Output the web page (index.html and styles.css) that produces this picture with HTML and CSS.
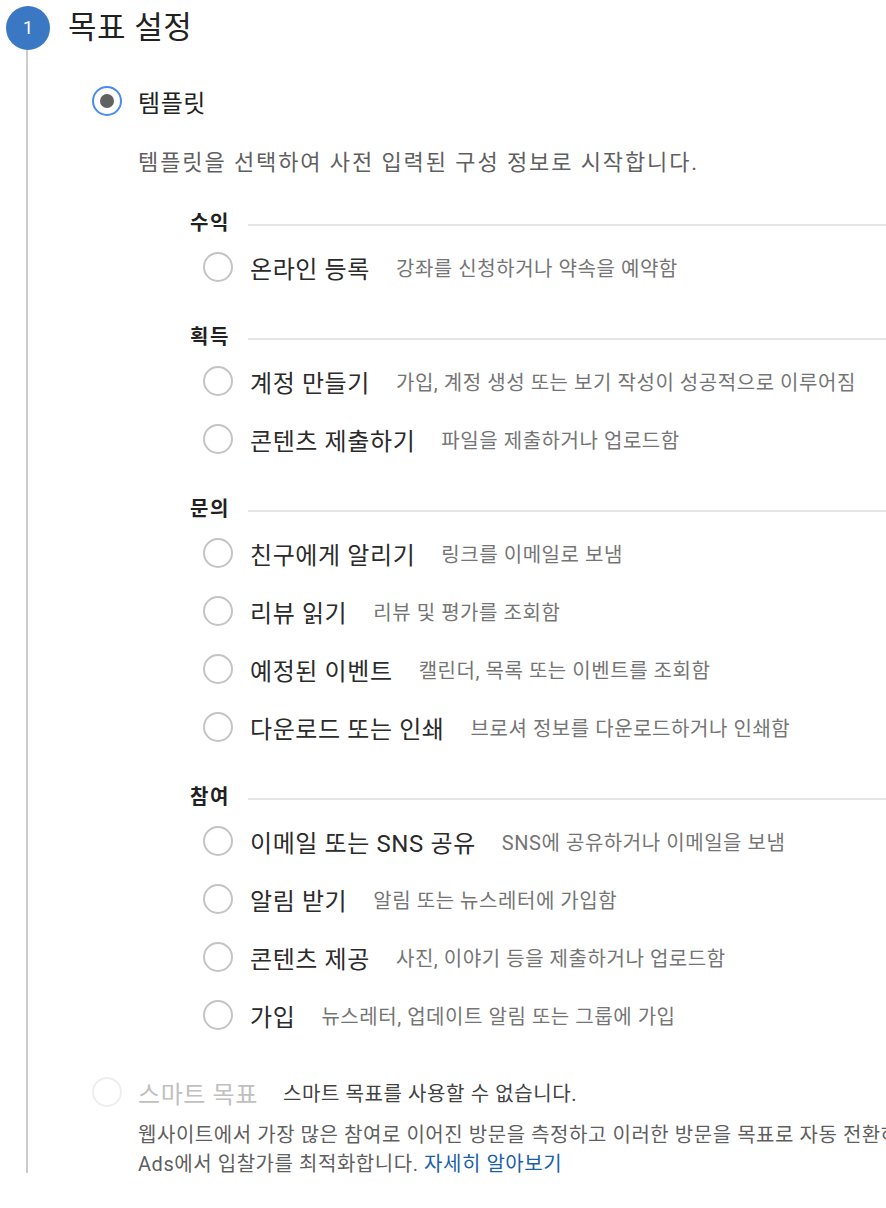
FILE: index.html
```html
<!DOCTYPE html>
<html lang="ko">
<head>
<meta charset="utf-8">
<title>목표 설정</title>
<link rel="stylesheet" href="styles.css">
</head>
<body>
<div class="stepper">
  <div class="rail">
    <div class="step-num">1</div>
    <div class="rail-line"></div>
  </div>
  <div class="content">
    <h1 class="title">목표 설정</h1>

    <div class="choice choice-main">
      <span class="radio radio-on"><span class="dot"></span></span>
      <span class="choice-label">템플릿</span>
    </div>
    <p class="choice-desc">템플릿을 선택하여 사전 입력된 구성 정보로 시작합니다.</p>

    <div class="groups">
      <section class="group">
        <div class="group-head"><span class="group-name">수익</span><span class="group-rule"></span></div>
        <div class="item"><span class="radio"></span><span class="item-label">온라인 등록</span><span class="item-desc">강좌를 신청하거나 약속을 예약함</span></div>
      </section>

      <section class="group">
        <div class="group-head"><span class="group-name">획득</span><span class="group-rule"></span></div>
        <div class="item"><span class="radio"></span><span class="item-label">계정 만들기</span><span class="item-desc">가입, 계정 생성 또는 보기 작성이 성공적으로 이루어짐</span></div>
        <div class="item"><span class="radio"></span><span class="item-label">콘텐츠 제출하기</span><span class="item-desc">파일을 제출하거나 업로드함</span></div>
      </section>

      <section class="group">
        <div class="group-head"><span class="group-name">문의</span><span class="group-rule"></span></div>
        <div class="item"><span class="radio"></span><span class="item-label">친구에게 알리기</span><span class="item-desc">링크를 이메일로 보냄</span></div>
        <div class="item"><span class="radio"></span><span class="item-label">리뷰 읽기</span><span class="item-desc">리뷰 및 평가를 조회함</span></div>
        <div class="item"><span class="radio"></span><span class="item-label">예정된 이벤트</span><span class="item-desc">캘린더, 목록 또는 이벤트를 조회함</span></div>
        <div class="item"><span class="radio"></span><span class="item-label">다운로드 또는 인쇄</span><span class="item-desc">브로셔 정보를 다운로드하거나 인쇄함</span></div>
      </section>

      <section class="group">
        <div class="group-head"><span class="group-name">참여</span><span class="group-rule"></span></div>
        <div class="item"><span class="radio"></span><span class="item-label">이메일 또는 SNS 공유</span><span class="item-desc">SNS에 공유하거나 이메일을 보냄</span></div>
        <div class="item"><span class="radio"></span><span class="item-label">알림 받기</span><span class="item-desc">알림 또는 뉴스레터에 가입함</span></div>
        <div class="item"><span class="radio"></span><span class="item-label">콘텐츠 제공</span><span class="item-desc">사진, 이야기 등을 제출하거나 업로드함</span></div>
        <div class="item"><span class="radio"></span><span class="item-label">가입</span><span class="item-desc">뉴스레터, 업데이트 알림 또는 그룹에 가입</span></div>
      </section>
    </div>

    <div class="choice choice-smart">
      <span class="radio radio-disabled"></span>
      <span class="choice-label label-disabled">스마트 목표</span>
      <span class="smart-note">스마트 목표를 사용할 수 없습니다.</span>
    </div>
    <p class="smart-desc">웹사이트에서 가장 많은 참여로 이어진 방문을 측정하고 이러한 방문을 목표로 자동 전환하여 Google Ads에서 입찰가를 최적화합니다. <a class="link" href="#">자세히 알아보기</a></p>
  </div>
</div>
</body>
</html>
```

FILE: styles.css
```css
html, body {
  margin: 0;
  padding: 0;
  background: #ffffff;
}

body {
  width: 886px;
  height: 1208px;
  overflow: hidden;
  font-family: Roboto, "Noto Sans CJK KR", sans-serif;
  color: #212121;
}

.stepper {
  display: flex;
  height: 1173px;
  overflow: hidden;
}

.rail {
  flex: 0 0 56px;
  display: flex;
  flex-direction: column;
  padding-top: 6px;
  padding-left: 6px;
  box-sizing: border-box;
}

.step-num {
  width: 44px;
  height: 44px;
  border-radius: 50%;
  background: #3b78c3;
  color: #ffffff;
  font-size: 18px;
  line-height: 44px;
  text-align: center;
  flex: 0 0 auto;
}

.rail-line {
  flex: 1 1 auto;
  width: 2px;
  margin-left: 20px;
  background: #cccccc;
}

.content {
  flex: 1 1 auto;
  min-width: 0;
  white-space: nowrap;
}

.title {
  margin: 6px 0 0 12px;
  height: 44px;
  font-size: 31px;
  letter-spacing: 0.5px;
  line-height: 44px;
  font-weight: 400;
  color: #212121;
}

.choice {
  display: flex;
  align-items: center;
  height: 44px;
  padding-left: 36px;
}

.choice-main {
  margin-top: 29px;
}

.choice-smart {
  margin-top: 26px;
}

.radio {
  box-sizing: border-box;
  width: 30px;
  height: 30px;
  border-radius: 50%;
  border: 2px solid #c4c4c4;
  display: inline-flex;
  align-items: center;
  justify-content: center;
  flex: 0 0 auto;
}

.radio-on {
  border-color: #4a8af4;
}

.dot {
  width: 14px;
  height: 14px;
  border-radius: 50%;
  background: #616161;
}

.radio-disabled {
  border-color: #eeeeee;
}

.choice-label {
  margin-left: 16px;
  font-size: 24px;
  letter-spacing: 0.6px;
  color: #212121;
}

.label-disabled {
  color: #c0c0c0;
}

.smart-note {
  margin-left: 25px;
  font-size: 20px;
  letter-spacing: 0.6px;
  color: #424242;
}

.choice-desc {
  margin: 25px 0 0 82px;
  font-size: 22px;
  letter-spacing: 1.9px;
  line-height: 30px;
  color: #5f5f5f;
}

.groups {
  padding-left: 134px;
  margin-top: 30px;
}

.group + .group {
  margin-top: 26px;
}

.group-head {
  display: flex;
  align-items: center;
  height: 30px;
  margin-top: -2px;
  margin-bottom: 2px;
}

.group-name {
  font-size: 20px;
  letter-spacing: 1.5px;
  font-weight: 700;
  color: #212121;
}

.group-rule {
  flex: 1 1 auto;
  height: 2px;
  margin-left: 18px;
  margin-top: 8px;
  background: #e4e4e4;
}

.item {
  display: flex;
  align-items: center;
  height: 58px;
  padding-left: 13px;
}

.item-label {
  margin-left: 17px;
  font-size: 24px;
  letter-spacing: 0.6px;
  color: #2b2b2b;
}

.item-desc {
  margin-left: 26px;
  font-size: 20px;
  letter-spacing: 0.55px;
  color: #757575;
}

.smart-desc {
  width: 860px;
  white-space: normal;
  margin: 7px 0 0 82px;
  font-size: 20px;
  letter-spacing: 0.55px;
  line-height: 29px;
  color: #5f5f5f;
}

.link {
  color: #1a5fa8;
  text-decoration: none;
}
```
